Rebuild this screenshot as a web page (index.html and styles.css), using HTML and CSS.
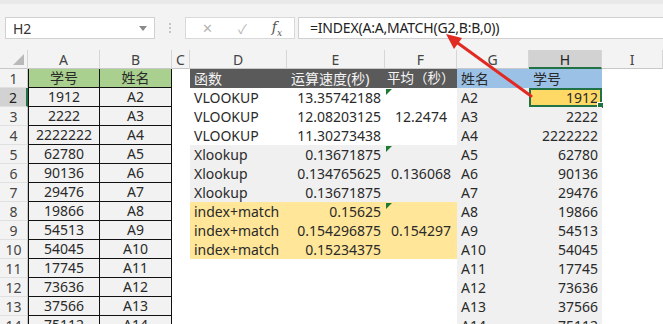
FILE: index.html
```html
<!DOCTYPE html>
<html lang="zh-CN">
<head>
  <meta charset="UTF-8">
  <title>INDEX MATCH</title>
  <link rel="stylesheet" href="styles.css">
</head>
<body>
  <!-- barra della formula -->
  <div class="toolbar">
    <div class="namebox">
      <span>H2</span>
      <span class="drop"></span>
    </div>
    <div class="grip"><i></i><i></i><i></i></div>
    <div class="fbuttons">
      <span class="btn-x">✕</span>
      <span class="btn-ok">✓</span>
      <span class="btn-fx">f<sub>x</sub></span>
    </div>
    <div class="formula">=INDEX(A:A,MATCH(G2,B:B,0))</div>
  </div>

  <!-- foglio -->
  <div class="sheet">
    <div class="hd corner"><span class="tri"></span></div>
    <div class="hd">A</div><div class="hd">B</div><div class="hd">C</div><div class="hd">D</div>
    <div class="hd">E</div><div class="hd">F</div><div class="hd">G</div><div class="hd sel">H</div><div class="hd">I</div>

    <div class="rh">1</div>
    <div class="c ab al green ctr">学号</div><div class="c ab green ctr">姓名</div><div class="c"></div>
    <div class="c dark txt">函数</div><div class="c dark txt">运算速度(秒)</div><div class="c dark txt tight">平均（秒）</div>
    <div class="c blue txt">姓名</div><div class="c blue txt">学号</div><div class="c"></div>

    <div class="rh sel">2</div>
    <div class="c ab al ctr">1912</div><div class="c ab ctr">A2</div><div class="c"></div>
    <div class="c txt">VLOOKUP</div><div class="c num">13.35742188</div><div class="c merge ctr note">12.2474</div>
    <div class="c gray txt">A2</div><div class="c active num">1912<span class="handle"></span></div><div class="c"></div>

    <div class="rh">3</div>
    <div class="c ab al ctr">2222</div><div class="c ab ctr">A3</div><div class="c"></div>
    <div class="c txt">VLOOKUP</div><div class="c num">12.08203125</div>
    <div class="c gray txt">A3</div><div class="c gray num">2222</div><div class="c"></div>

    <div class="rh">4</div>
    <div class="c ab al ctr">2222222</div><div class="c ab ctr">A4</div><div class="c"></div>
    <div class="c txt">VLOOKUP</div><div class="c num">11.30273438</div>
    <div class="c gray txt">A4</div><div class="c gray num">2222222</div><div class="c"></div>

    <div class="rh">5</div>
    <div class="c ab al ctr">62780</div><div class="c ab ctr">A5</div><div class="c"></div>
    <div class="c gray txt">Xlookup</div><div class="c gray num">0.13671875</div><div class="c gray merge ctr note">0.136068</div>
    <div class="c gray txt">A5</div><div class="c gray num">62780</div><div class="c"></div>

    <div class="rh">6</div>
    <div class="c ab al ctr">90136</div><div class="c ab ctr">A6</div><div class="c"></div>
    <div class="c gray txt">Xlookup</div><div class="c gray num">0.134765625</div>
    <div class="c gray txt">A6</div><div class="c gray num">90136</div><div class="c"></div>

    <div class="rh">7</div>
    <div class="c ab al ctr">29476</div><div class="c ab ctr">A7</div><div class="c"></div>
    <div class="c gray txt">Xlookup</div><div class="c gray num">0.13671875</div>
    <div class="c gray txt">A7</div><div class="c gray num">29476</div><div class="c"></div>

    <div class="rh">8</div>
    <div class="c ab al ctr">19866</div><div class="c ab ctr">A8</div><div class="c"></div>
    <div class="c yellow txt">index+match</div><div class="c yellow num">0.15625</div><div class="c yellow merge ctr note">0.154297</div>
    <div class="c gray txt">A8</div><div class="c gray num">19866</div><div class="c"></div>

    <div class="rh">9</div>
    <div class="c ab al ctr">54513</div><div class="c ab ctr">A9</div><div class="c"></div>
    <div class="c yellow txt">index+match</div><div class="c yellow num">0.154296875</div>
    <div class="c gray txt">A9</div><div class="c gray num">54513</div><div class="c"></div>

    <div class="rh">10</div>
    <div class="c ab al ctr">54045</div><div class="c ab ctr">A10</div><div class="c"></div>
    <div class="c yellow txt">index+match</div><div class="c yellow num">0.15234375</div>
    <div class="c gray txt">A10</div><div class="c gray num">54045</div><div class="c"></div>

    <div class="rh">11</div>
    <div class="c ab al ctr">17745</div><div class="c ab ctr">A11</div><div class="c"></div>
    <div class="c"></div><div class="c"></div><div class="c"></div>
    <div class="c gray txt">A11</div><div class="c gray num">17745</div><div class="c"></div>

    <div class="rh">12</div>
    <div class="c ab al ctr">73636</div><div class="c ab ctr">A12</div><div class="c"></div>
    <div class="c"></div><div class="c"></div><div class="c"></div>
    <div class="c gray txt">A12</div><div class="c gray num">73636</div><div class="c"></div>

    <div class="rh">13</div>
    <div class="c ab al ctr">37566</div><div class="c ab ctr">A13</div><div class="c"></div>
    <div class="c"></div><div class="c"></div><div class="c"></div>
    <div class="c gray txt">A13</div><div class="c gray num">37566</div><div class="c"></div>

    <div class="rh">14</div>
    <div class="c ab al ctr">75112</div><div class="c ab ctr">A14</div><div class="c"></div>
    <div class="c"></div><div class="c"></div><div class="c"></div>
    <div class="c gray txt">A14</div><div class="c gray num">75112</div><div class="c"></div>
  </div>

  <!-- freccia rossa -->
  <svg class="arrow" width="663" height="324" viewBox="0 0 663 324">
    <line x1="531" y1="96" x2="455" y2="41" stroke="#e02a22" stroke-width="3" stroke-linecap="round"/>
    <polygon points="446,34 462,38 454,49" fill="#e02a22"/>
  </svg>
</body>
</html>
```

FILE: styles.css
```css
/* base */
body {
  margin: 0;
  width: 663px;
  height: 324px;
  overflow: hidden;
  position: relative;
  background: #fff;
  color: #2a2a2a;
  font-family: "Noto Sans", "Noto Sans CJK SC", sans-serif;
  font-size: 14px;
}

/* barra formula */
.toolbar {
  height: 50px;
  box-sizing: border-box;
  padding-top: 13px;
  background: #f3f3f3;
  border-top: 4px solid #e9e9e9;
  display: flex;
  align-items: flex-start;
}

.namebox {
  margin-left: 5px;
  width: 150px;
  height: 22px;
  box-sizing: border-box;
  background: #fff;
  border: 1px solid #d0d0d0;
  display: flex;
  align-items: center;
  justify-content: space-between;
  padding: 0 7px 0 7px;
  font-size: 14px;
  color: #333;
}

.drop {
  width: 0;
  height: 0;
  border-left: 4px solid transparent;
  border-right: 4px solid transparent;
  border-top: 5px solid #8a8a8a;
}

.grip {
  width: 30px;
  height: 22px;
  display: flex;
  flex-direction: column;
  align-items: center;
  justify-content: center;
  gap: 2px;
}

.grip i {
  width: 2px;
  height: 2px;
  background: #c4c4c4;
}

.fbuttons {
  width: 110px;
  height: 22px;
  box-sizing: border-box;
  background: #fff;
  border: 1px solid #d9d9d9;
  display: flex;
  align-items: center;
  justify-content: space-between;
  padding: 0 12px 0 16px;
}

.btn-x, .btn-ok {
  color: #b5b5b5;
  font-size: 13px;
}

.btn-fx {
  font-family: "DejaVu Serif", serif;
  font-style: italic;
  font-size: 14px;
  color: #555;
}

.btn-fx sub {
  font-size: 9px;
}

.formula {
  margin-left: 3px;
  flex: 1;
  height: 22px;
  box-sizing: border-box;
  background: #fff;
  border: 1px solid #d0d0d0;
  border-right: none;
  padding-left: 11px;
  line-height: 20px;
  font-size: 14px;
  letter-spacing: -0.2px;
  color: #222;
}

/* griglia */
.sheet {
  display: grid;
  grid-template-columns: 28px 72px 72px 18px 97px 98px 72px 72px 73px 1fr;
  grid-auto-rows: 19px;
}

.sheet > div {
  box-sizing: border-box;
  line-height: 19px;
  white-space: nowrap;
  overflow: hidden;
}

.hd {
  background: #f3f3f3;
  border-right: 1px solid #d6d6d6;
  border-bottom: 1px solid #c8c8c8;
  text-align: center;
  color: #444;
}

.hd.sel {
  background: #d2d2d2;
  border-bottom: 2px solid #217346;
  color: #222;
}

.corner {
  position: relative;
}

.tri {
  position: absolute;
  right: 3px;
  bottom: 3px;
  width: 0;
  height: 0;
  border-left: 11px solid transparent;
  border-bottom: 11px solid #b9b9b9;
}

.rh {
  background: #f3f3f3;
  border-right: 1px solid #c8c8c8;
  border-bottom: 1px solid #e0e0e0;
  text-align: center;
  color: #444;
}

.rh.sel {
  background: #d2d2d2;
  border-right: 2px solid #217346;
  color: #222;
}

/* celle */
.c { position: relative; }
.txt { padding-left: 4px; }
.tight { padding-left: 2px; font-size: 13.5px; }
.num { text-align: right; padding-right: 4px; }
.ctr { text-align: center; }

.ab {
  background: #f2f2f2;
  border-right: 1px solid #111;
  border-bottom: 1px solid #111;
  line-height: 18px !important;
}

.ab.al { border-left: 1px solid #111; }

.green { background: #a9d08e; }
.dark { background: #5a5a5a; color: #f4f4f4; }
.blue { background: #9bc2e6; }
.gray { background: #f0f0f0; }
.yellow { background: #ffe699; }

.merge {
  grid-row: span 3;
  display: flex;
  align-items: center;
  justify-content: center;
}

/* triangolino verde */
.note::before {
  content: "";
  position: absolute;
  left: 1px;
  top: 1px;
  border-top: 6px solid #1e7a32;
  border-right: 6px solid transparent;
}

/* cella attiva */
.active {
  background: #ffd966;
  border: 2px solid #217346;
  padding-right: 2px;
  line-height: 15px !important;
  overflow: visible !important;
}

.handle {
  position: absolute;
  right: -4px;
  bottom: -4px;
  width: 5px;
  height: 5px;
  background: #217346;
  border: 1px solid #fff;
}

.arrow {
  position: absolute;
  left: 0;
  top: 0;
  pointer-events: none;
}
```
